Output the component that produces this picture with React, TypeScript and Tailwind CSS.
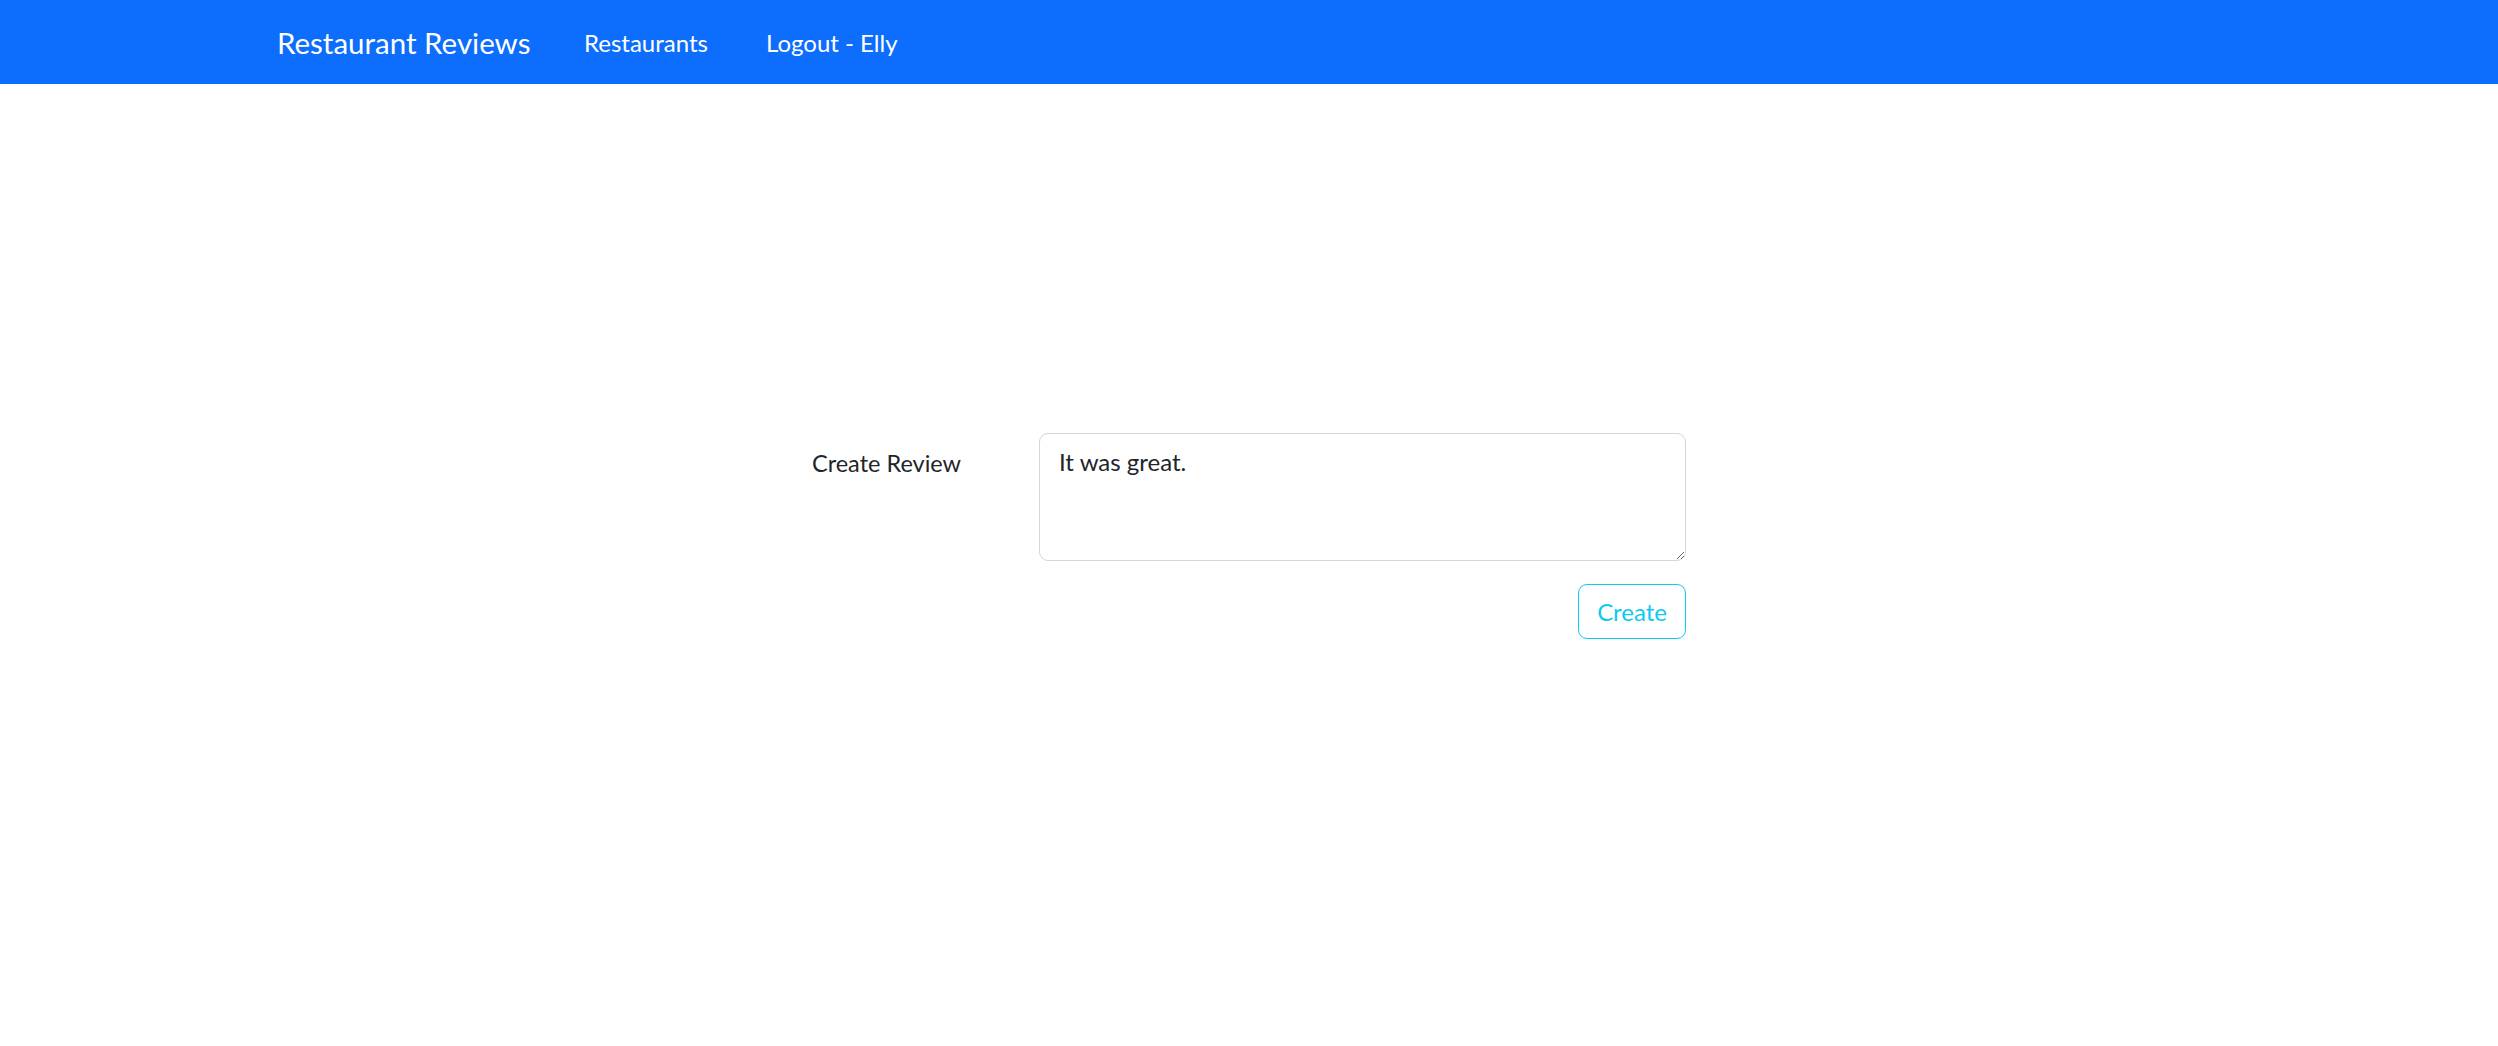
const font = { fontFamily: 'Lato, "Open Sans", sans-serif' }

const NavBar = () => {
  return (
    <nav className="h-[84px] w-full bg-[#0d6efd]">
      <div className="mx-auto flex h-full max-w-[1980px] items-center px-[18px] pt-[2px] text-white">
        <a href="#" className="w-[307px] text-[29.5px] leading-none">
          Restaurant Reviews
        </a>
        <a href="#" className="w-[182px] text-[24px] leading-none">
          Restaurants
        </a>
        <a href="#" className="text-[24px] leading-none">
          Logout - Elly
        </a>
      </div>
    </nav>
  )
}

const ReviewForm = () => {
  return (
    <form className="mx-auto mt-[349px] w-[874px]">
      <div className="flex">
        <label
          htmlFor="review"
          className="w-[227px] pt-[12px] text-[23.5px] leading-[36px] text-[#212529]"
        >
          Create Review
        </label>
        <textarea
          id="review"
          defaultValue="It was great."
          style={font}
          className="h-[128px] flex-1 rounded-[9px] border-[1.5px] border-[#d3d7db] px-[19px] py-[10px] text-[24px] leading-[36px] text-[#212529] outline-none"
        />
      </div>
      <div className="mt-[23px] flex justify-end">
        <button
          type="button"
          style={font}
          className="h-[55px] rounded-[9px] border-[1.5px] border-[#0dcaf0] px-[18px] text-[24px] leading-[36px] text-[#0dcaf0]"
        >
          Create
        </button>
      </div>
    </form>
  )
}

export default function App() {
  return (
    <div className="min-h-[1046px] bg-white" style={font}>
      <NavBar />
      <ReviewForm />
    </div>
  )
}
